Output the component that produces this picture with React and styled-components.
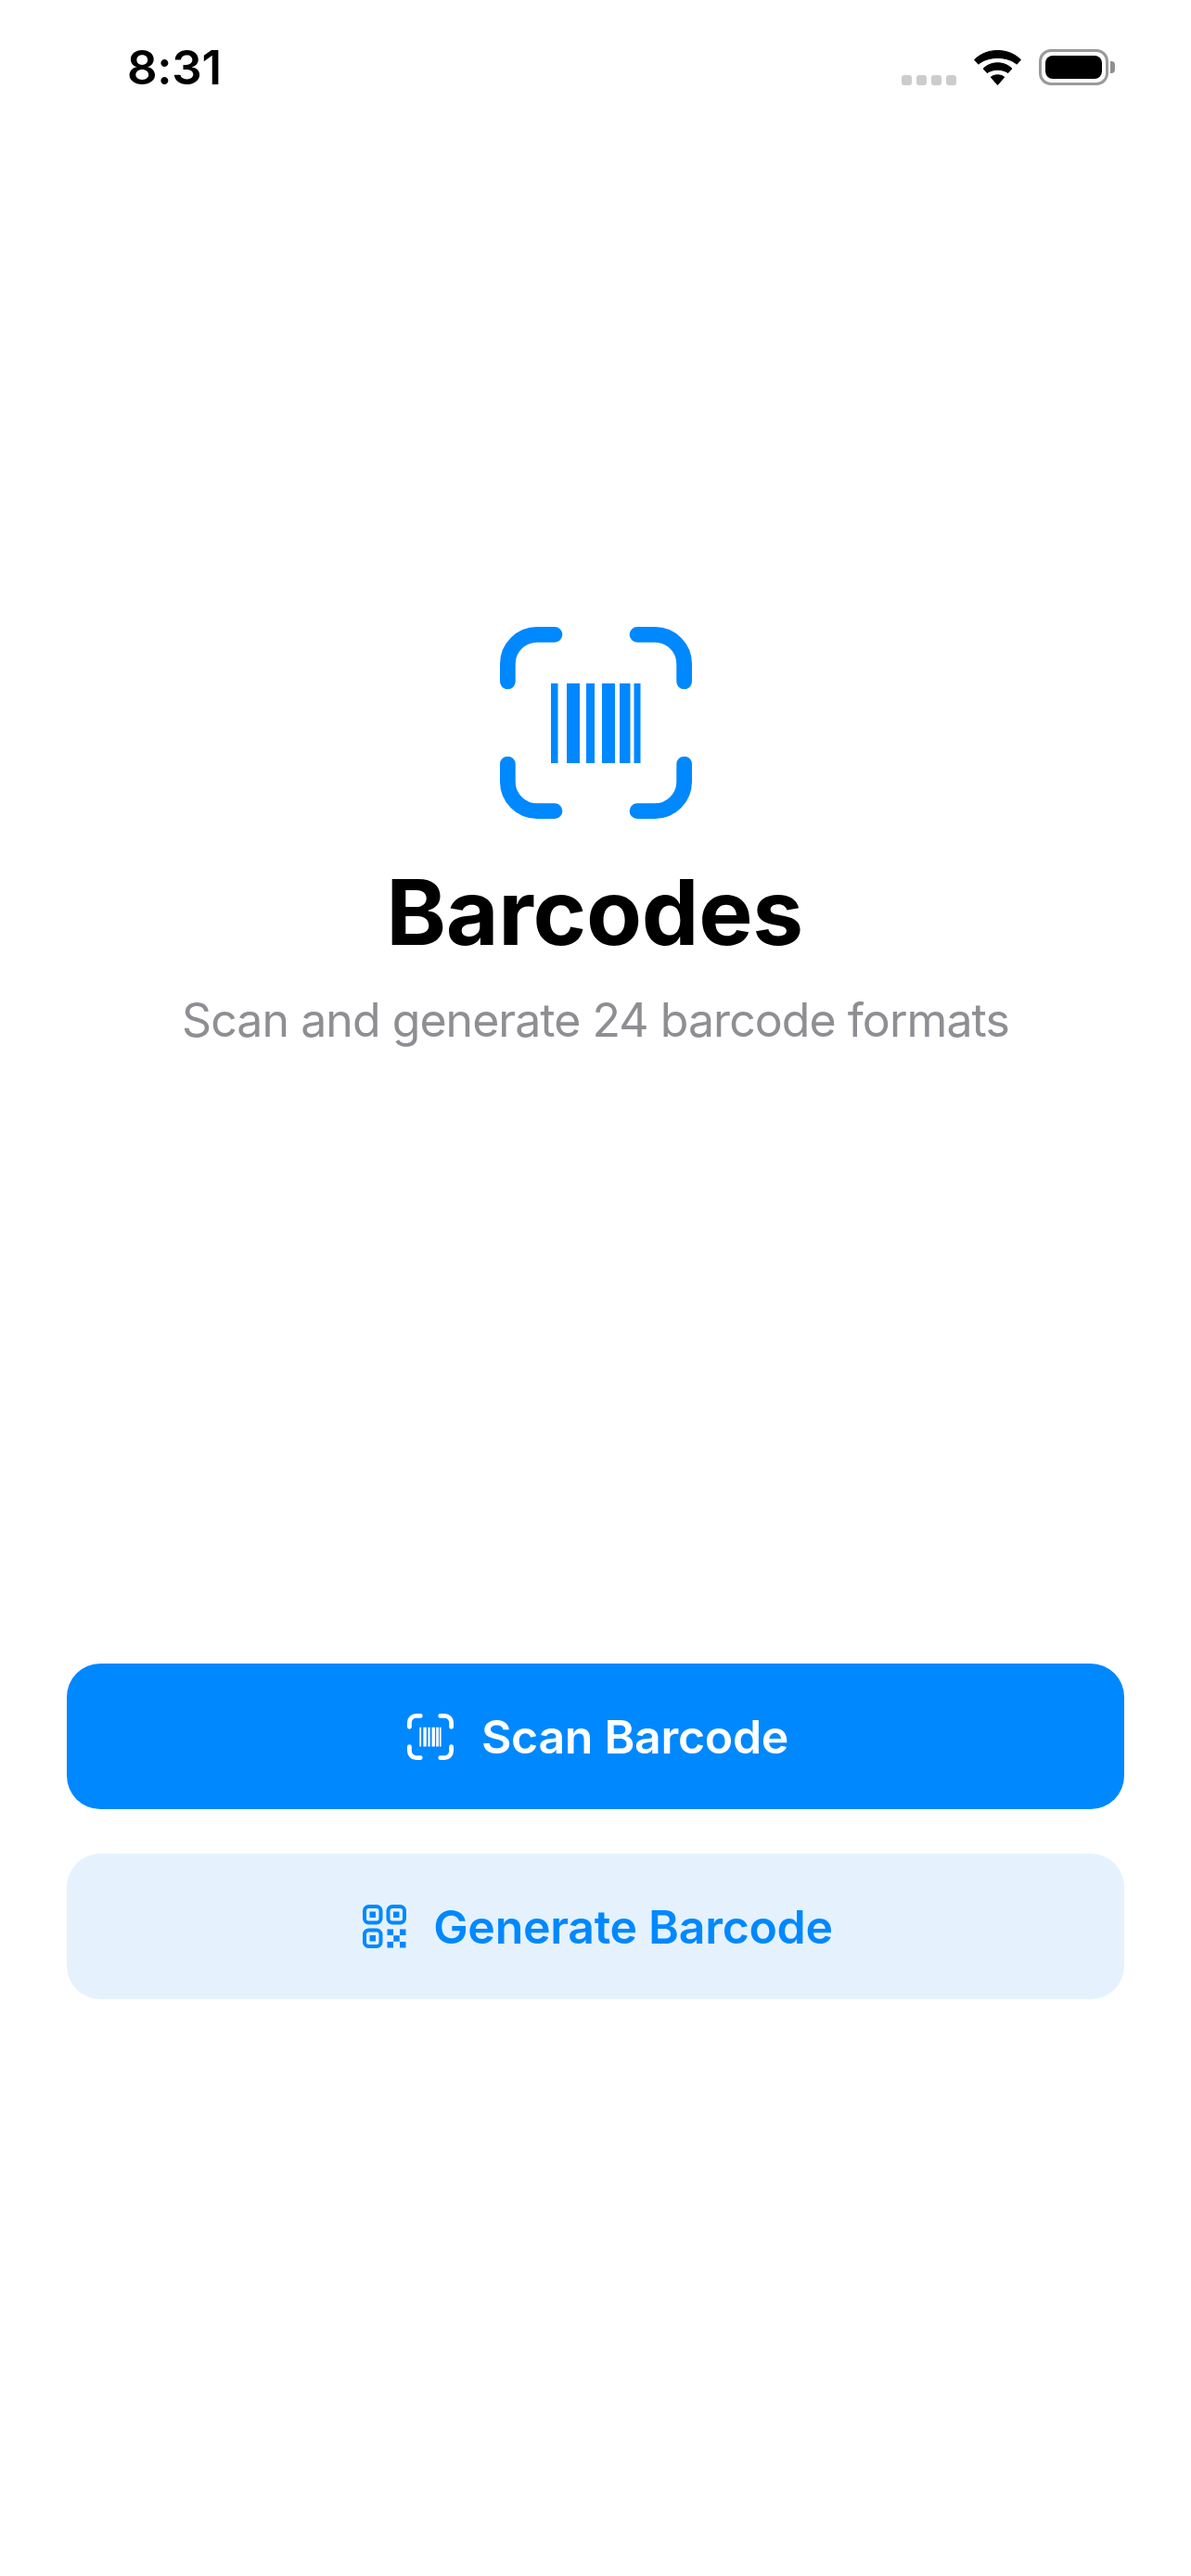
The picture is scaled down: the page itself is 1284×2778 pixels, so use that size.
import React from 'react';
import styled, { createGlobalStyle } from 'styled-components';

const GlobalStyle = createGlobalStyle`
  html, body {
    margin: 0;
    padding: 0;
    background: #ffffff;
  }
  * {
    box-sizing: border-box;
  }
`;

const Screen = styled.div`
  width: 1284px;
  height: 2778px;
  background: #ffffff;
  font-family: Inter, 'Liberation Sans', sans-serif;
  display: flex;
  flex-direction: column;
  overflow: hidden;
`;

const StatusBar = styled.div`
  height: 132px;
  padding: 0 82px 0 137px;
  display: flex;
  align-items: flex-start;
  justify-content: space-between;
`;

const Clock = styled.div`
  margin-top: 42px;
  font-size: 51px;
  line-height: 62px;
  font-weight: 600;
  letter-spacing: -0.3px;
  color: #000000;
`;

const StatusIcons = styled.div`
  margin-top: 53px;
  display: flex;
  align-items: flex-end;
`;

const SignalDots = styled.div`
  display: flex;
  gap: 5px;
  margin-right: 19px;
`;

const SignalDot = styled.span`
  width: 11px;
  height: 11px;
  border-radius: 3px;
  background: #cccccc;
`;

const WifiIcon = styled.svg`
  display: block;
  width: 51px;
  height: 38px;
  margin-right: 19px;
`;

const Battery = styled.div`
  display: flex;
  align-items: center;
  gap: 2px;
`;

const BatteryBody = styled.div`
  width: 75px;
  height: 39px;
  padding: 4px;
  border: 3.5px solid #9a9a9a;
  border-radius: 13px;
`;

const BatteryFill = styled.div`
  width: 100%;
  height: 100%;
  background: #000000;
  border-radius: 8px;
`;

const BatteryCap = styled.div`
  width: 5px;
  height: 13px;
  background: #8f8f8f;
  border-radius: 0 4px 4px 0;
`;

const Hero = styled.div`
  padding-top: 544px;
  display: flex;
  flex-direction: column;
  align-items: center;
`;

const Title = styled.h1`
  margin: 42px 2px 0 0;
  font-size: 98px;
  line-height: 118px;
  font-weight: 700;
  letter-spacing: -0.3px;
  color: #000000;
`;

const Subtitle = styled.p`
  margin: 27px 0 0;
  font-size: 50px;
  line-height: 60px;
  font-weight: 400;
  letter-spacing: -0.95px;
  color: #8e8e93;
`;

const Actions = styled.div`
  margin-top: 664px;
  padding: 0 72px;
  display: flex;
  flex-direction: column;
  gap: 48px;
`;

const ActionButton = styled.button`
  height: 157px;
  width: 100%;
  border: none;
  border-radius: 36px;
  padding: 0 0 0 5px;
  display: flex;
  align-items: center;
  justify-content: center;
  gap: ${p => p.$gap}px;
  font-family: inherit;
  font-size: 50px;
  font-weight: 570;
  letter-spacing: -0.3px;
  background: ${p => (p.$primary ? '#0088ff' : '#e5f2fe')};
  color: ${p => (p.$primary ? '#ffffff' : '#0088ff')};
`;

const BARS = [
  [55, 7.5],
  [72, 14],
  [93, 9],
  [110, 14],
  [129, 11.5],
  [144.5, 7],
];

// viewfinder corners with the barcode in the middle
const ScanGlyph = ({ size, color, weight = 16.7 }) => {
  const a = weight / 2;
  const b = 207 - a;
  const r = 40 - a;
  return (
    <svg width={size} height={size} viewBox="0 0 207 207" style={{ display: 'block' }}>
      <g fill="none" stroke={color} strokeWidth={weight} strokeLinecap="round">
        <path d={`M${a} 59V40A${r} ${r} 0 0 1 40 ${a}H59`} />
        <path d={`M148 ${a}H167A${r} ${r} 0 0 1 ${b} 40V59`} />
        <path d={`M${a} 148V167A${r} ${r} 0 0 0 40 ${b}H59`} />
        <path d={`M148 ${b}H167A${r} ${r} 0 0 0 ${b} 167V148`} />
      </g>
      {BARS.map(([x, w]) => (
        <rect key={x} x={x} y="61" width={w} height="86" fill={color} />
      ))}
    </svg>
  );
};

const FINDERS = [
  [0, 0],
  [25.5, 0],
  [0, 25.5],
];

const SPECKS = [
  [26.5, 26.5],
  [40, 26.5],
  [33.25, 33.25],
  [26.5, 40],
  [40, 40],
];

const QrGlyph = ({ color }) => (
  <svg width="47" height="47" viewBox="0 0 47 47" style={{ display: 'block' }}>
    {FINDERS.map(([x, y]) => (
      <g key={`${x}-${y}`}>
        <rect x={x + 2} y={y + 2} width="17.5" height="17.5" rx="4.5" fill="none" stroke={color} strokeWidth="4" />
        <rect x={x + 7.5} y={y + 7.5} width="6.5" height="6.5" fill={color} />
      </g>
    ))}
    {SPECKS.map(([x, y]) => (
      <rect key={`${x}-${y}`} x={x} y={y} width="6.5" height="6.5" fill={color} />
    ))}
  </svg>
);

export default function App() {
  return (
    <Screen>
      <GlobalStyle />
      <StatusBar>
        <Clock>8:31</Clock>
        <StatusIcons>
          <SignalDots>
            <SignalDot />
            <SignalDot />
            <SignalDot />
            <SignalDot />
          </SignalDots>
          <WifiIcon viewBox="0 0 51 38">
            <g fill="#000" stroke="#000" strokeWidth="1" strokeLinejoin="round">
              <path d="M25.5 0.5C35.5 0.5 44.2 4.2 50.5 10.5L46.2 15.2C41 10.8 33.7 8.5 25.5 8.5S10 10.8 4.8 15.2L0.5 10.5C6.8 4.2 15.5 0.5 25.5 0.5Z" />
              <path d="M25.5 13.8C31.7 13.8 37 16.2 41 20L36.8 24.6C33.9 22.6 29.9 21.3 25.5 21.3S17.1 22.6 14.2 24.6L10 20C14 16.2 19.3 13.8 25.5 13.8Z" />
              <path d="M25.5 26.8C28.4 26.8 30.8 27.6 32.8 29.2L25.5 37.5L18.2 29.2C20.2 27.6 22.6 26.8 25.5 26.8Z" />
            </g>
          </WifiIcon>
          <Battery>
            <BatteryBody>
              <BatteryFill />
            </BatteryBody>
            <BatteryCap />
          </Battery>
        </StatusIcons>
      </StatusBar>

      <Hero>
        <ScanGlyph size={207} color="#0088ff" />
        <Title>Barcodes</Title>
        <Subtitle>Scan and generate 24 barcode formats</Subtitle>
      </Hero>

      <Actions>
        <ActionButton $primary $gap={30}>
          <ScanGlyph size={50} color="#ffffff" weight={20} />
          Scan Barcode
        </ActionButton>
        <ActionButton $gap={29}>
          <QrGlyph color="#0088ff" />
          Generate Barcode
        </ActionButton>
      </Actions>
    </Screen>
  );
}
